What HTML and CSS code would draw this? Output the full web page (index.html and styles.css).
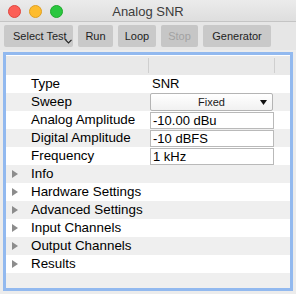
FILE: index.html
```html
<!DOCTYPE html>
<html>
<head>
<meta charset="utf-8">
<link rel="stylesheet" href="styles.css">
</head>
<body>
<div class="window">
  <div class="titlebar">
    <div class="lights">
      <span class="light red"></span>
      <span class="light yellow"></span>
      <span class="light green"></span>
    </div>
    <div class="title">Analog SNR</div>
    <div></div>
  </div>
  <div class="toolbar">
    <div class="btn btn-select">Select Test
      <svg class="chev" width="7" height="5" viewBox="0 0 7 5"><path d="M0.5 0.8 L3.5 3.8 L6.5 0.8" fill="none" stroke="#222" stroke-width="1.2"/></svg>
    </div>
    <div class="btn btn-run">Run</div>
    <div class="btn btn-loop">Loop</div>
    <div class="btn btn-stop disabled">Stop</div>
    <div class="btn btn-gen">Generator</div>
  </div>
  <div class="body">
    <div class="tree">
      <div class="row header">
        <div></div><div></div><div class="sep"></div><div class="sep"></div>
      </div>
      <div class="row">
        <div></div><div class="label">Type</div><div class="value text">SNR</div><div></div>
      </div>
      <div class="row alt">
        <div></div><div class="label">Sweep</div>
        <div class="value"><div class="select">Fixed<svg class="arrow" width="7" height="5" viewBox="0 0 7 5"><path d="M0 0 H7 L3.5 5 Z" fill="#111"/></svg></div></div>
        <div></div>
      </div>
      <div class="row">
        <div></div><div class="label">Analog Amplitude</div><div class="value"><div class="input">-10.00 dBu</div></div><div></div>
      </div>
      <div class="row alt">
        <div></div><div class="label">Digital Amplitude</div><div class="value"><div class="input">-10 dBFS</div></div><div></div>
      </div>
      <div class="row">
        <div></div><div class="label">Frequency</div><div class="value"><div class="input">1 kHz</div></div><div></div>
      </div>
      <div class="row alt group">
        <div class="exp"><svg width="6" height="8" viewBox="0 0 6 8"><path d="M0 0 L6 4 L0 8 Z" fill="#8c8c8c"/></svg></div><div class="label">Info</div><div></div><div></div>
      </div>
      <div class="row group">
        <div class="exp"><svg width="6" height="8" viewBox="0 0 6 8"><path d="M0 0 L6 4 L0 8 Z" fill="#8c8c8c"/></svg></div><div class="label wide">Hardware Settings</div><div></div><div></div>
      </div>
      <div class="row alt group">
        <div class="exp"><svg width="6" height="8" viewBox="0 0 6 8"><path d="M0 0 L6 4 L0 8 Z" fill="#8c8c8c"/></svg></div><div class="label wide">Advanced Settings</div><div></div><div></div>
      </div>
      <div class="row group">
        <div class="exp"><svg width="6" height="8" viewBox="0 0 6 8"><path d="M0 0 L6 4 L0 8 Z" fill="#8c8c8c"/></svg></div><div class="label wide">Input Channels</div><div></div><div></div>
      </div>
      <div class="row alt group">
        <div class="exp"><svg width="6" height="8" viewBox="0 0 6 8"><path d="M0 0 L6 4 L0 8 Z" fill="#8c8c8c"/></svg></div><div class="label wide">Output Channels</div><div></div><div></div>
      </div>
      <div class="row group">
        <div class="exp"><svg width="6" height="8" viewBox="0 0 6 8"><path d="M0 0 L6 4 L0 8 Z" fill="#8c8c8c"/></svg></div><div class="label">Results</div><div></div><div></div>
      </div>
      <div class="row alt empty"></div>
    </div>
  </div>
</div>
</body>
</html>
```
FILE: styles.css
```css
html, body {
  margin: 0;
  padding: 0;
}
body {
  width: 296px;
  height: 294px;
  overflow: hidden;
  font-family: "Liberation Sans", Arial, sans-serif;
  background: #ececec;
}
.window {
  width: 296px;
  height: 294px;
  display: flex;
  flex-direction: column;
  background: #ececec;
}
.titlebar {
  height: 21px;
  border-bottom: 1px solid #c4c4c4;
  background: linear-gradient(#ebebeb, #dedede);
  display: grid;
  grid-template-columns: 1fr auto 1fr;
  align-items: center;
}
.lights {
  display: flex;
  gap: 8px;
  padding-left: 8px;
  padding-top: 1px;
}
.light {
  width: 11px;
  height: 11px;
  border-radius: 50%;
  display: block;
}
.red { background: #fc5f57; border: 1px solid #e0463e; }
.yellow { background: #fdbc2e; border: 1px solid #df9f22; }
.green { background: #2ac73f; border: 1px solid #1faa2c; }
.title {
  font-size: 13px;
  color: #3c3c3c;
  padding-top: 1px;
}
.toolbar {
  height: 28px;
  box-sizing: border-box;
  padding: 3px 4px 0 4px;
  background: #e6e6e6;
  display: flex;
  gap: 5px;
  align-items: flex-start;
}
.btn {
  position: relative;
  height: 22px;
  box-sizing: border-box;
  background: #c9c9c9;
  border-radius: 2px;
  font-size: 11px;
  line-height: 22px;
  color: #1e1e1e;
  text-align: center;
}
.btn-select { width: 69px; text-align: left; padding-left: 9px; }
.btn-run { width: 35px; }
.btn-loop { width: 38px; }
.btn-stop { width: 37px; }
.btn-gen { width: 68px; }
.disabled { color: #a2a2a2; background: #c6c6c6; }
.chev {
  position: absolute;
  right: 1px;
  bottom: 3px;
}
.body {
  flex: 1;
  padding: 2px 3px 0 3px;
}
.tree {
  border: 3px solid #92b9ef;
  border-bottom-width: 3px;
  background: #fff;
  padding-top: 1px;
  height: 239px;
  box-sizing: border-box;
  overflow: hidden;
}
.row {
  display: grid;
  grid-template-columns: 25px 118px 126px 1fr;
  height: 18px;
  align-items: center;
  background: #fff;
}
.row.alt { background: #efefef; }
.header {
  height: 19px;
  background: #e9e9e9;
}
.sep {
  height: 15px;
  border-left: 1px solid #cfcfcf;
  margin-left: -1px;
  align-self: start;
  margin-top: 2px;
}
.label {
  font-size: 13.4px;
  color: #000;
  white-space: nowrap;
  line-height: 18px;
}
.value {
  padding: 0 1px;
  height: 18px;
  font-size: 13px;
}
.value.text {
  line-height: 18px;
  padding-left: 3px;
}
.input {
  margin-top: 1px;
  height: 17px;
  box-sizing: border-box;
  border: 1px solid #b9b9b9;
  background: #fff;
  font-size: 13px;
  line-height: 15px;
  padding-left: 2px;
  color: #000;
}
.select {
  position: relative;
  margin-top: 0;
  height: 18px;
  box-sizing: border-box;
  border: 1px solid #b4b4b4;
  border-radius: 2px;
  background: linear-gradient(#ffffff, #f1f1f1);
  font-size: 11px;
  line-height: 16px;
  text-align: center;
  color: #1a1a1a;
  margin-right: 1px;
}
.arrow {
  position: absolute;
  right: 5px;
  top: 6px;
}
.exp {
  padding-left: 6px;
  display: flex;
  align-items: center;
}
.empty { height: 18px; }
```
